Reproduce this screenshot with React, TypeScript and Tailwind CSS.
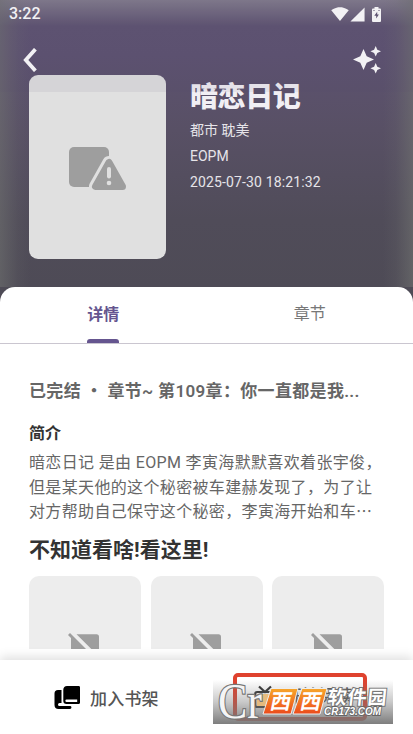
import { MdSignalWifi4Bar, MdSignalCellular4Bar } from 'react-icons/md';

const intro = [
  '暗恋日记 是由 EOPM 李寅海默默喜欢着张宇俊，',
  '但是某天他的这个秘密被车建赫发现了，为了让',
  '对方帮助自己保守这个秘密，李寅海开始和车⋯',
];

function BatteryIcon() {
  return (
    <svg viewBox="0 0 9 15" className="w-[9px] h-[15px]">
      <path fill="#fff" d="M2.5 0h4v1.5H8a1 1 0 0 1 1 1V14a1 1 0 0 1-1 1H1a1 1 0 0 1-1-1V2.5a1 1 0 0 1 1-1h1.5z" />
      <path fill="#5d5271" d="M5.2 4.8 2.3 8.7h1.9v2.9L6.900 7.600H5.200zM1.500 3h1v1h-1zM6.500 3h1v1h-1z" />
    </svg>
  );
}

function BackIcon() {
  return (
    <svg viewBox="0 0 14 24" className="w-[14px] h-[24px]" fill="none" stroke="#fff" strokeWidth="3.8">
      <path d="M12.400 1.200 2.800 12l9.600 10.800" />
    </svg>
  );
}

function SparklesIcon() {
  return (
    <svg viewBox="0 0 28 28" className="w-[28px] h-[28px]" fill="#fff">
      <path d="m10.500 3 3.200 7.300L21 13.500l-7.300 3.200-3.200 7.300-3.200-7.300L0 13.500l7.300-3.200z" />
      <path d="m22.700 0 1.600 3.700L28 5.300l-3.700 1.600-1.600 3.700-1.600-3.700-3.700-1.600 3.700-1.600z" />
      <path d="m22.700 17 1.600 3.700 3.700 1.600-3.700 1.600-1.600 3.700-1.600-3.700-3.700-1.600 3.700-1.600z" />
    </svg>
  );
}

function BrokenCoverIcon() {
  return (
    <svg viewBox="0 0 58 44" className="w-[58px] h-[44px]">
      <rect x="0" y="0" width="40" height="40" rx="5" fill="#9e9e9e" />
      <g fill="#9e9e9e" strokeLinejoin="round">
        <path d="M40 15.500 26.500 39.500h27Z" stroke="#e0e0e0" strokeWidth="13" />
        <path d="M40 15.500 26.500 39.500h27Z" stroke="#9e9e9e" strokeWidth="7" />
      </g>
      <path d="M40 22v7.500" stroke="#e0e0e0" strokeWidth="4" strokeLinecap="round" />
      <circle cx="40" cy="36" r="2.300" fill="#e0e0e0" />
    </svg>
  );
}

function NoImageIcon() {
  return (
    <svg viewBox="0 0 32 32" className="w-[32px] h-[32px]" fill="#9e9e9e">
      <path d="M0 2 2 0l30 30-2 2-3-3H6a3 3 0 0 1-3-3V5z" />
      <path d="M8.500 1.200h20a2.500 2.500 0 0 1 2.500 2.500v20z" />
    </svg>
  );
}

function BooksIcon() {
  return (
    <svg viewBox="0 0 26 23" className="w-[26px] h-[23px]">
      <path d="M4 4h3.500v13H5.500a1.500 1.500 0 0 0 0 3H16a1.400 1.400 0 0 1 0 2.900H4.500A4 4 0 0 1 .5 19V7.500A3.500 3.500 0 0 1 4 4Z" />
      <path
        fillRule="evenodd"
        d="M13 0h11.500c1 0 1.500.5 1.500 1.500v15.300c0 .7-.4 1.200-1.200 1.200H12.500c-2 0-3.200-1.300-3.200-3V3.700C9.300 1.500 10.800 0 13 0Zm-.4 13.600a1.250 1.250 0 0 0 0 2.500h10.600v-2.500Z"
      />
    </svg>
  );
}

function TvIcon() {
  return (
    <svg viewBox="0 0 22 24" className="w-[22px] h-[24px]" fill="none" stroke="#333" strokeWidth="2.200">
      <rect x="1.200" y="7" width="19.600" height="15" rx="2" />
      <path d="m5 1.500 6 5.500 6-5.500" />
      <path d="M17 11v2M17 15v2" />
    </svg>
  );
}

function Watermark() {
  return (
    <svg viewBox="0 0 180 44" className="absolute left-[213px] top-[20px] w-[180px] h-[44px] overflow-visible">
      <defs>
        <linearGradient id="shade" x1="0" y1="0" x2="0" y2="1">
          <stop offset="0" stopColor="#777" stopOpacity="0" />
          <stop offset="0.5" stopColor="#777" stopOpacity="0.4" />
          <stop offset="1" stopColor="#777" stopOpacity="0.95" />
        </linearGradient>
        <linearGradient id="orange" x1="0" y1="0" x2="0" y2="1">
          <stop offset="0" stopColor="#f7a62a" />
          <stop offset="1" stopColor="#ec4a1c" />
        </linearGradient>
      </defs>
      <rect width="180" height="44" fill="url(#shade)" />
      <path d="M44 14h17l-7 12H44z" fill="#e9b975" opacity=".9" />
      <text
        x="5"
        y="38"
        fontSize="50"
        textLength="44"
        lengthAdjust="spacingAndGlyphs"
        fill="#f5f5f5"
        stroke="#777"
        strokeWidth="2.500"
        paintOrder="stroke"
        className="font-['Liberation_Serif']"
      >
        Cr
      </text>
      <path d="M58 8.500h27l-7 25.500H50zM89 8.500h25l-7 25.500H80z" fill="url(#orange)" stroke="#eee" strokeWidth="1" />
      <g className="font-['Noto_Sans_CJK_SC',sans-serif] font-bold" fill="#fff">
        <text transform="translate(56 29) skewX(-12)" fontSize="21">西</text>
        <text transform="translate(86 29) skewX(-12)" fontSize="21">西</text>
        <text transform="translate(114 23.500) skewX(-6)" fontSize="19" textLength="59" stroke="#777" strokeWidth="2" paintOrder="stroke">软件园</text>
      </g>
      <text
        x="111"
        y="34.500"
        fontSize="10.500"
        textLength="57"
        lengthAdjust="spacingAndGlyphs"
        fill="#fff"
        stroke="#666"
        strokeWidth="1.800"
        paintOrder="stroke"
        className="font-['Liberation_Sans'] font-bold italic"
      >
        CR173.COM
      </text>
    </svg>
  );
}

export default function App() {
  return (
    <div className="w-[413px] h-[734px] overflow-hidden flex flex-col bg-[#4e4b56] font-[Roboto,'Noto_Sans_CJK_SC',sans-serif]">
      <header className="relative h-[287px] shrink-0 text-white bg-[linear-gradient(to_right,rgba(112,114,112,0.55),rgba(112,114,112,0.12)_18px,transparent_30px,transparent_383px,rgba(112,114,112,0.15)_396px,rgba(112,114,112,0.6)),linear-gradient(to_bottom,#817b8c,#5e5371_26px,#5d5270_55px,#585065_130px,#504c59_220px,#4e4b56)]">
        {/* Status bar */}
        <div className="h-7 flex items-center justify-between pl-[9px] pr-[32px]">
          <span className="text-[16px] font-medium leading-7">3:22</span>
          <div className="flex items-center">
            <MdSignalWifi4Bar className="w-[18px] h-[18px]" />
            <MdSignalCellular4Bar className="w-[17px] h-[17px] mr-[6px]" />
            <BatteryIcon />
          </div>
        </div>

        {/* Navigation */}
        <div className="h-[47px] flex items-center justify-between pl-[23px] pr-[32px] pt-[16px]">
          <BackIcon />
          <SparklesIcon />
        </div>

        {/* Book */}
        <div className="flex pl-[29px]">
          <div className="w-[137px] h-[184px] rounded-[9px] bg-[#e0e0e0] pl-10 pt-[72px]">
            <BrokenCoverIcon />
          </div>
          <div className="pl-6 text-[14px] text-[#e6e4e9]">
            <h1 className="pt-[4px] text-[28px] leading-[38px] font-black text-[#f1eff4] tracking-[-0.400px]">暗恋日记</h1>
            <p className="leading-[26px]">都市 耽美</p>
            <p className="leading-[26px]">EOPM</p>
            <p className="leading-[26px] tracking-[0.140px]">2025-07-30 18:21:32</p>
          </div>
        </div>
        <div className="absolute inset-x-0 top-0 h-[92px] bg-[#5d5271]/8 pointer-events-none" />
      </header>

      <main className="h-[373px] shrink-0 rounded-t-[15px] bg-white overflow-hidden">
        {/* Tabs */}
        <div className="h-[57px] flex border-b border-[#cac6d0] text-[16px]">
          <div className="flex-1 flex flex-col items-center justify-between text-[#65558f]">
            <span className="pt-[15px] leading-[26px] font-semibold">详情</span>
            <span className="w-8 h-1 rounded-t-[3px] bg-[#65558f]" />
          </div>
          <div className="flex-1 text-center pt-[14px] leading-[26px] text-[#777]">章节</div>
        </div>

        <div className="px-[29px] pt-[34px] whitespace-nowrap">
          <p className="text-[17px] leading-[26px] font-semibold tracking-[0.330px] text-[#666]">
            已完结 ・ 章节~ 第109章：你一直都是我...
          </p>
          <h2 className="mt-[18px] text-[16px] leading-[24px] font-bold text-[#333]">简介</h2>
          <div className="mt-[5px] text-[16px] leading-[24.600px] tracking-[0.350px] text-[#666]">
            {intro.map((line) => (
              <p key={line}>{line}</p>
            ))}
          </div>
          <h2 className="mt-[10px] text-[21px] leading-[30px] font-bold text-[#333]">不知道看啥!看这里!</h2>
          <div className="mt-[11px] h-[73px] flex gap-[9.500px] overflow-hidden">
            {[0, 1, 2].map((item) => (
              <div key={item} className="w-[112px] h-[150px] shrink-0 rounded-[10px] bg-[#ededed] pl-[39px] pt-[57px]">
                <NoImageIcon />
              </div>
            ))}
          </div>
        </div>
      </main>

      {/* Bottom actions */}
      <footer className="relative h-[74px] shrink-0 flex bg-white shadow-[0_-3px_10px_rgba(0,0,0,0.13)] text-[17px] font-medium text-[#555]">
        <button className="w-[206px] flex items-center pl-[54px] gap-[10px]">
          <BooksIcon />
          <span className="pt-[5px] tracking-[0.200px]">加入书架</span>
        </button>
        <button className="w-[134px] h-[48px] ml-[27px] mt-[13px] rounded-[5px] border-[4px] border-[#df422e] flex items-center pl-[17px] gap-[9px] whitespace-nowrap">
          <TvIcon />
          <span>开始阅读</span>
        </button>
        <Watermark />
      </footer>
    </div>
  );
}
